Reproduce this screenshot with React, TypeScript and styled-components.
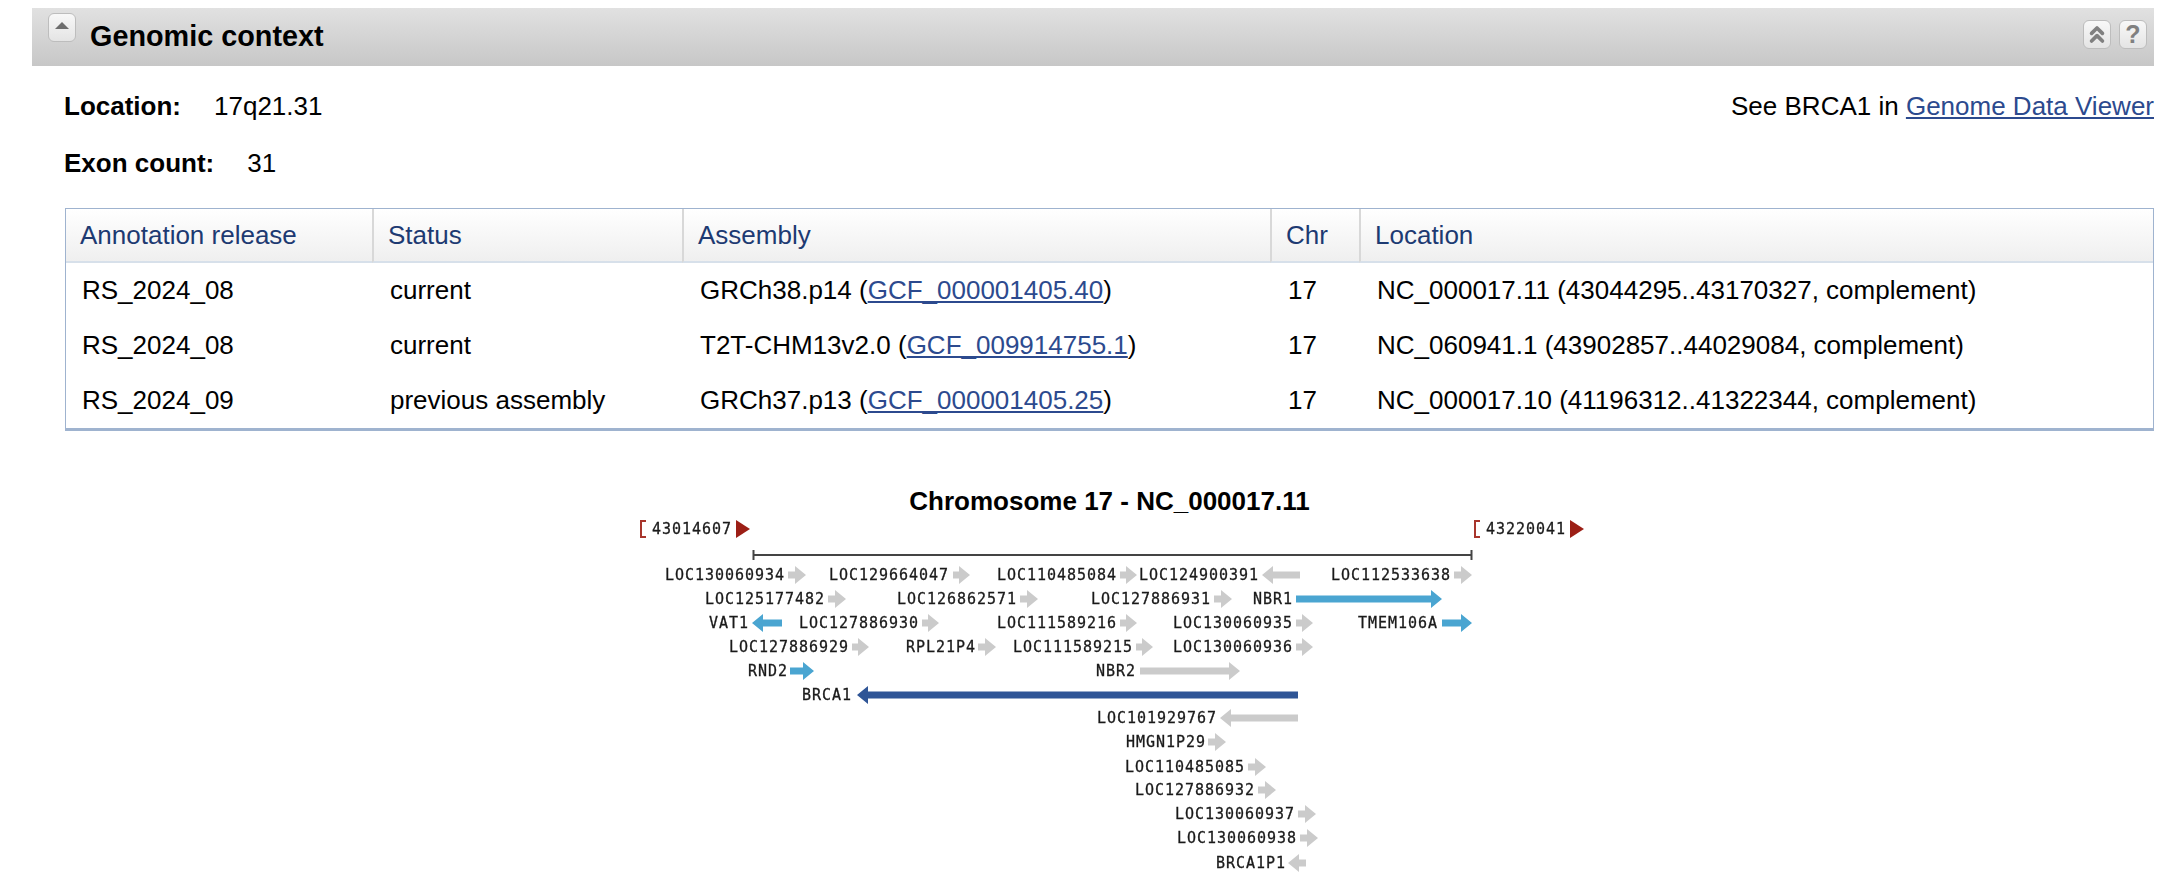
import styled, { createGlobalStyle } from 'styled-components';
import { ChevronsUp } from 'lucide-react';

const GlobalStyle = createGlobalStyle`
  html, body {
    margin: 0;
    height: 100%;
    overflow: hidden;
    background: #fff;
    color: #000;
    font-family: "Liberation Sans", Arial, sans-serif;
  }
`;

const Section = styled.section`
  margin: 8px 26px 0 32px;
`;

const HeaderBar = styled.header`
  display: flex;
  align-items: flex-start;
  height: 58px;
  padding: 5px 7px 0 16px;
  box-sizing: border-box;
  background: linear-gradient(#e1e1e1, #c7c7c7);
`;

const Heading = styled.h2`
  flex: 1;
  margin: 0 0 0 14px;
  font-size: 28.8px;
  line-height: 46px;
  font-weight: bold;
`;

const IconButton = styled.button<{ $top?: number }>`
  display: flex;
  align-items: center;
  justify-content: center;
  width: 28px;
  height: 29px;
  margin: ${({ $top }) => $top ?? 0}px 0 0 8px;
  padding: 0;
  box-sizing: border-box;
  border: 1px solid #bdbdbd;
  border-radius: 6px;
  background: linear-gradient(#f8f8f8, #e4e4e4);
  color: #808080;
  font: bold 25px "Liberation Sans", sans-serif;
`;

const ToggleButton = styled(IconButton)`
  margin: 0;
`;

const Caret = styled.span`
  width: 0;
  height: 0;
  margin-bottom: 5px;
  border-left: 7px solid transparent;
  border-right: 7px solid transparent;
  border-bottom: 7px solid #6e6e6e;
`;

const Body = styled.div`
  padding-left: 33px;
`;

const SummaryRow = styled.div`
  display: flex;
  justify-content: space-between;
  align-items: baseline;
  height: 57px;
  margin-left: -1px;
  font-size: 26px;
  line-height: 30px;
  padding-top: 25px;
  box-sizing: border-box;
`;

const ExonRow = styled(SummaryRow)`
  height: 85px;
  padding-top: 25px;
`;

const Label = styled.strong`
  display: inline-block;
  margin-right: 33px;
`;

const Link = styled.a`
  color: #2c4a8e;
  text-decoration: underline;
`;

const Table = styled.table`
  width: 100%;
  table-layout: fixed;
  border-collapse: separate;
  border-spacing: 0;
  border: 1px solid #9fb3cf;
  border-bottom: 3px solid #9fb3cf;
  font-size: 26px;
`;

const HeadCell = styled.th<{ $width?: number }>`
  width: ${({ $width }) => ($width ? `${$width}px` : 'auto')};
  height: 54px;
  padding: 0 0 0 14px;
  box-sizing: border-box;
  background: linear-gradient(#fff, #efefef);
  border-bottom: 2px solid #d7e0ea;
  border-left: 2px solid #d8d8d8;
  color: #1d3a72;
  font-weight: normal;
  text-align: left;

  &:first-child {
    border-left: 0;
  }
`;

const Cell = styled.td`
  height: 55px;
  padding: 0 0 0 18px;
  box-sizing: border-box;

  &:first-child {
    padding-left: 16px;
  }
`;

const ChartTitle = styled.h3`
  margin: 55px 0 0;
  font-size: 26px;
  line-height: 30px;
  font-weight: bold;
  text-align: center;
`;

const GeneMap = styled.svg`
  display: block;
  margin: 0 auto;
  filter: blur(0.4px);
`;

const GeneLabel = styled.text`
  font-family: "DejaVu Sans Mono", "Liberation Mono", monospace;
  font-size: 15px;
  letter-spacing: 0.97px;
  fill: #1a1a1a;
  stroke: #1a1a1a;
  stroke-width: 0.3px;
`;

const GREY = '#cbcbcb';
const BLUE = '#4aa5d1';
const NAVY = '#2f5596';

type Gene = [string, number, number, number, number, string?];

// label, text x, row y, arrow tail x, arrow tip x (tip left of tail = reverse strand)
const genes: Gene[] = [
  ['LOC130060934', 665, 575, 788, 806],
  ['LOC129664047', 829, 575, 953, 970],
  ['LOC110485084', 997, 575, 1120, 1137],
  ['LOC124900391', 1139, 575, 1300, 1262],
  ['LOC112533638', 1331, 575, 1454, 1472],
  ['LOC125177482', 705, 599, 828, 846],
  ['LOC126862571', 897, 599, 1020, 1038],
  ['LOC127886931', 1091, 599, 1214, 1232],
  ['NBR1', 1253, 599, 1296, 1442, BLUE],
  ['VAT1', 709, 623, 782, 752, BLUE],
  ['LOC127886930', 799, 623, 922, 939],
  ['LOC111589216', 997, 623, 1120, 1137],
  ['LOC130060935', 1173, 623, 1296, 1313],
  ['TMEM106A', 1358, 623, 1442, 1472, BLUE],
  ['LOC127886929', 729, 647, 852, 869],
  ['RPL21P4', 906, 647, 978, 996],
  ['LOC111589215', 1013, 647, 1136, 1153],
  ['LOC130060936', 1173, 647, 1296, 1313],
  ['RND2', 748, 671, 790, 814, BLUE],
  ['NBR2', 1096, 671, 1140, 1240],
  ['BRCA1', 802, 695, 1298, 857, NAVY],
  ['LOC101929767', 1097, 718, 1298, 1220],
  ['HMGN1P29', 1126, 742, 1208, 1226],
  ['LOC110485085', 1125, 767, 1248, 1266],
  ['LOC127886932', 1135, 790, 1258, 1276],
  ['LOC130060937', 1175, 814, 1298, 1316],
  ['LOC130060938', 1177, 838, 1300, 1318],
  ['BRCA1P1', 1216, 863, 1306, 1288],
];

const arrowPath = (y: number, tail: number, tip: number) => {
  const dir = tip > tail ? 1 : -1;
  const neck = tip - dir * 11;
  return `M${tail} ${y - 3.5}H${neck}V${y - 9}L${tip} ${y}L${neck} ${y + 9}V${y + 3.5}H${tail}Z`;
};

const RangeMark = ({ x, value }: { x: number; value: string }) => (
  <g>
    <path d={`M${x + 6} 521H${x + 1}V537H${x + 6}`} fill="none" stroke="#a8352c" strokeWidth="2" />
    <GeneLabel x={x + 12} y={534}>
      {value}
    </GeneLabel>
    <path d={`M${x + 96} 520L${x + 110} 529L${x + 96} 538Z`} fill="#9c1f16" />
  </g>
);

const rows = [
  ['RS_2024_08', 'current', 'GRCh38.p14', 'GCF_000001405.40', 'NC_000017.11 (43044295..43170327, complement)'],
  ['RS_2024_08', 'current', 'T2T-CHM13v2.0', 'GCF_009914755.1', 'NC_060941.1 (43902857..44029084, complement)'],
  ['RS_2024_09', 'previous assembly', 'GRCh37.p13', 'GCF_000001405.25', 'NC_000017.10 (41196312..41322344, complement)'],
];

const App = () => {
  return (
    <>
      <GlobalStyle />
      <Section>
        <HeaderBar>
          <ToggleButton aria-label="Collapse">
            <Caret />
          </ToggleButton>
          <Heading>Genomic context</Heading>
          <IconButton $top={7} aria-label="Go to top">
            <ChevronsUp size={27} strokeWidth={3.4} />
          </IconButton>
          <IconButton $top={7} aria-label="Help">
            ?
          </IconButton>
        </HeaderBar>
        <Body>
          <SummaryRow>
            <span>
              <Label>Location:</Label>17q21.31
            </span>
            <span>
              See BRCA1 in <Link href="#">Genome Data Viewer</Link>
            </span>
          </SummaryRow>
          <ExonRow>
            <span>
              <Label>Exon count:</Label>31
            </span>
          </ExonRow>
          <Table>
            <thead>
              <tr>
                <HeadCell $width={306}>Annotation release</HeadCell>
                <HeadCell $width={310}>Status</HeadCell>
                <HeadCell $width={588}>Assembly</HeadCell>
                <HeadCell $width={89}>Chr</HeadCell>
                <HeadCell>Location</HeadCell>
              </tr>
            </thead>
            <tbody>
              {rows.map(([release, status, assembly, accession, location]) => (
                <tr key={accession}>
                  <Cell>{release}</Cell>
                  <Cell>{status}</Cell>
                  <Cell>
                    {assembly} (<Link href="#">{accession}</Link>)
                  </Cell>
                  <Cell>17</Cell>
                  <Cell>{location}</Cell>
                </tr>
              ))}
            </tbody>
          </Table>
          <ChartTitle>Chromosome 17 - NC_000017.11</ChartTitle>
          <GeneMap width="979" height="360" viewBox="620 516 979 360">
            <RangeMark x={640} value="43014607" />
            <RangeMark x={1474} value="43220041" />
            <path d="M753 555H1472M753.5 550V560M1471.5 550V560" fill="none" stroke="#444" strokeWidth="2" />
            {genes.map(([label, x, y, tail, tip, color]) => (
              <g key={label + x}>
                <GeneLabel x={x} y={y + 5}>
                  {label}
                </GeneLabel>
                <path d={arrowPath(y, tail, tip)} fill={color ?? GREY} />
              </g>
            ))}
          </GeneMap>
        </Body>
      </Section>
    </>
  );
};

export default App;
